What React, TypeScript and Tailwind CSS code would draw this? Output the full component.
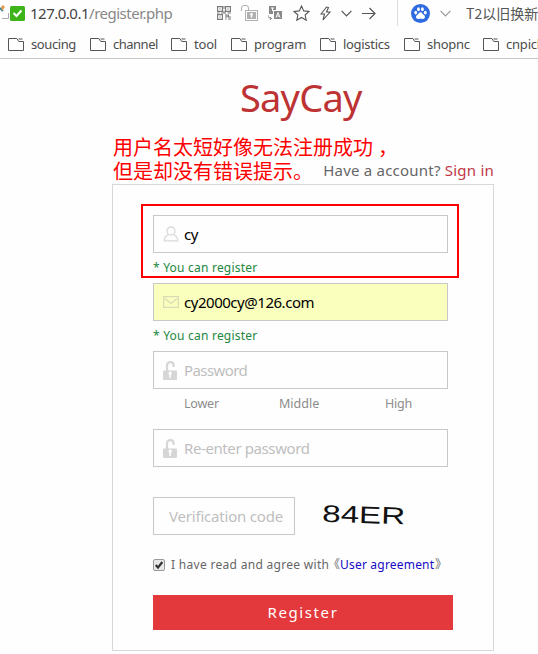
import type { ReactNode } from "react";

const FONT = "font-['Noto_Sans','Noto_Sans_CJK_SC',sans-serif]";

function FolderIcon() {
  return (
    <svg className="mt-px h-[13px] w-4 shrink-0" viewBox="0 0 16 13" fill="none" stroke="#555" strokeWidth="1">
      <path d="M.5 12.5V.5h8.3l2 3h4.7v9zM10.5 1h4" />
    </svg>
  );
}

function Bookmark({ label, width, text }: { label: string; width: string; text: string }) {
  return (
    <div className={`flex shrink-0 items-center gap-[7px] ${width}`}>
      <FolderIcon />
      <span className={`whitespace-nowrap text-[13px] leading-4 text-[#4c4c4c] ${text}`}>{label}</span>
    </div>
  );
}

function QrIcon() {
  return (
    <svg className="h-[14px] w-[14px] shrink-0" viewBox="0 0 14 14" fill="none" stroke="#777" strokeWidth="1.1">
      <path d="M.6.6h4.8v4.8H.6zM8.6.6h4.8v4.8H8.6zM.6 8.6h4.8v4.8H.6zM2.4 3h1.2M10.4 3h1.2M2.4 11h1.2M7 0v3M7 4.5v2M0 7h2.5M4 7h5M10.5 7H14M8 9h2v2H8M11.5 8.5v2.5H14M8 13h1.5M11 13h3" />
    </svg>
  );
}

function UnlockedBadgeIcon() {
  return (
    <svg className="h-[17px] w-[17px] shrink-0" viewBox="0 0 17 17" fill="none" stroke="#b0b0b0">
      <path d="M.5 6V3A2.5 2.5 0 0 1 3 .5h2A2.5 2.5 0 0 1 7.5 3v2.5" />
      <rect x="4.5" y="5.5" width="12" height="10" />
      <path fill="#b0b0b0" stroke="none" d="M6 7h9v7H6z" />
      <path stroke="#fff" strokeWidth="1.5" d="M10.5 9v3.5" />
      <circle cx="10.5" cy="9.3" r="1.3" fill="#fff" stroke="none" />
    </svg>
  );
}

function TranslateIcon() {
  return (
    <svg className="h-[14px] w-[14px] shrink-0" viewBox="0 0 14 14" fill="none">
      <path fill="#888" d="M1 0h7v4H5v4H1zM6 5h8v8H6z" />
      <path stroke="#fff" d="M3 2h3M4.5 2v3M8 11.5l2-5 2 5M9 10h2" />
      <path stroke="#888" d="M.5 9.5v1q0 2 3 2M2 11l1.500 1.500L2 14" />
    </svg>
  );
}

function Chevron({ color }: { color: string }) {
  return (
    <svg className="h-[7px] w-[11px] shrink-0" viewBox="0 0 11 7" fill="none" stroke={color} strokeWidth="1.2">
      <path d="m.6.8 4.9 5 4.9-5" />
    </svg>
  );
}

function BrowserBar() {
  return (
    <div className="flex h-[26px] items-center">
      <svg className="h-[26px] w-[10px] shrink-0" viewBox="0 0 10 26" fill="none">
        <path stroke="#2786a8" strokeWidth="2" d="m0 8 3 3" />
        <path fill="#e59a4b" d="m1 7 2-2 2 2-3 4z" />
        <path stroke="#aaa" d="M2 18.5h6.500V13" />
      </svg>
      <svg className="h-[15px] w-[15px] shrink-0" viewBox="0 0 15 15" fill="none">
        <rect width="15" height="15" rx="1.5" fill="#3db518" />
        <path stroke="#fff" strokeWidth="2" d="m3.5 7 3 3 5-5.500" />
      </svg>
      <div className="ml-[5px] w-[187px] shrink-0 whitespace-nowrap text-[15px] leading-6 tracking-[-0.5px] text-[#888]">
        <span className="text-[#444]">127.0.0.1</span>/register.php
      </div>
      <QrIcon />
      <div className="ml-[10px] flex shrink-0"><UnlockedBadgeIcon /></div>
      <div className="ml-[10px] flex shrink-0"><TranslateIcon /></div>
      <svg className="ml-[11px] h-4 w-[17px] shrink-0" viewBox="0 0 17 16" fill="none" stroke="#555" strokeWidth="1.1">
        <path d="m8.5 1 2.200 4.900 5.300.6-3.900 3.500 1.100 5.200-4.700-2.700-4.700 2.700L4.900 10 1 6.500l5.300-.6z" />
      </svg>
      <svg className="ml-[10px] h-[15px] w-[11px] shrink-0" viewBox="0 0 11 15" fill="none" stroke="#555" strokeWidth="1.1">
        <path d="M6.5 1 1 8h3.500L3 14l7-8H6.500l2-4.500z" />
      </svg>
      <div className="ml-[10px] flex shrink-0"><Chevron color="#555" /></div>
      <svg className="ml-[10px] h-[13px] w-[14px] shrink-0" viewBox="0 0 14 13" fill="none" stroke="#555" strokeWidth="1.2">
        <path d="M0 6.5h13M7.5 1 13 6.500 7.500 12" />
      </svg>
      <div className="ml-[21px] h-full w-px shrink-0 bg-[#ddd]" />
      <svg className="ml-[13px] h-[19px] w-[19px] shrink-0" viewBox="0 0 19 19">
        <circle cx="9.5" cy="9.5" r="9.5" fill="#2f6be0" />
        <g fill="#fff">
          <ellipse cx="4.7" cy="8.6" rx="1.4" ry="1.9" />
          <ellipse cx="7.5" cy="5.3" rx="1.4" ry="2" />
          <ellipse cx="11.4" cy="5.3" rx="1.4" ry="2" />
          <ellipse cx="14.3" cy="8.6" rx="1.4" ry="1.9" />
          <path d="M9.5 8.200c1.500 0 2 1.800 3.400 2.800 2 1.600 1 4-1 3.900-1.600-.2-3-.2-4.700 0-2.100.1-3.100-2.300-1.100-3.900C7.500 10 8 8.200 9.500 8.200z" />
        </g>
      </svg>
      <div className="ml-[10px] flex shrink-0"><Chevron color="#999" /></div>
      <span className="ml-[15px] whitespace-nowrap font-['Noto_Sans_CJK_SC',sans-serif] text-[14px] leading-6 text-[#555]">T2以旧换新</span>
    </div>
  );
}

function BookmarksBar() {
  return (
    <div className="flex h-[33px] border-b border-[#c8c8c8] pb-px pl-2 pt-[5px]">
      <Bookmark label="soucing" width="w-[82px]" text="tracking-[-0.4px]" />
      <Bookmark label="channel" width="w-[81px]" text="tracking-[-0.5px]" />
      <Bookmark label="tool" width="w-[60px]" text="tracking-[-0.2px]" />
      <Bookmark label="program" width="w-[89px]" text="tracking-[-0.2px]" />
      <Bookmark label="logistics" width="w-[84px]" text="tracking-[-0.3px]" />
      <Bookmark label="shopnc" width="w-[79px]" text="tracking-[-0.3px]" />
      <Bookmark label="cnpick" width="w-[70px]" text="tracking-[-0.2px]" />
    </div>
  );
}

function UserIcon() {
  return (
    <svg className="h-4 w-4" viewBox="0 0 16 16" fill="none" stroke="#d9d9d9" strokeWidth="1.3">
      <circle cx="8" cy="5" r="4" />
      <path d="M5.5 8.500C3 9.500 1.500 11.500 1.200 14.800h13.600c-.3-3.300-1.800-5.300-4.300-6.300" />
    </svg>
  );
}

function MailIcon() {
  return (
    <svg className="h-3 w-4" viewBox="0 0 16 12" fill="none" stroke="#d9dcb4" strokeWidth="1.3">
      <path d="M.6.6h14.8v10.8H.6zM2 2.500l6 5 6-5" />
    </svg>
  );
}

function LockIcon() {
  return (
    <svg className="h-[19px] w-[15px]" viewBox="0 0 15 19" fill="none">
      <path stroke="#d6d6d6" strokeWidth="2.2" d="M4 10V4.500Q4 1.200 7.300 1.200T10.600 4.500V6" />
      <rect y="9.5" width="14" height="9.5" rx="1" fill="#d6d6d6" />
      <path fill="#fff" d="M5.5 12.500a1.700 1.700 0 1 1 2.400 1.300V17H6.300v-3.200a1.500 1.500 0 0 1-.8-1.300z" />
    </svg>
  );
}

function Field({ icon, tone, children }: { icon: ReactNode; tone: string; children: ReactNode }) {
  return (
    <div className={`flex h-[38px] w-[295px] items-center border border-[#c8c8c8] pl-[9px] text-[15px] ${tone}`}>
      <span className="w-[21px] shrink-0">{icon}</span>
      {children}
    </div>
  );
}

function Hint() {
  return (
    <div className="flex h-[30px] items-center text-[12px] text-[#23873f]">
      <span className="whitespace-nowrap tracking-[0.22px]">* You can register</span>
    </div>
  );
}

export default function App() {
  return (
    <div className={`h-[654px] w-[538px] overflow-hidden bg-[#fefefe] ${FONT}`}>
      <BrowserBar />
      <BookmarksBar />
      <h1 className="mt-[11px] h-[54px] pl-[240px] text-[38px] leading-[54px] tracking-[-0.8px] text-[#bd3333]">SayCay</h1>
      <div className="ml-[112px] mt-[11px] h-[49px] w-[382px]">
        <p className="h-6 whitespace-nowrap pl-px font-['Noto_Sans_CJK_SC',sans-serif] text-[20px] leading-6 text-[#ff0000]">
          用户名太短好像无法注册成功<span className="ml-[5px]">，</span>
        </p>
        <div className="flex h-[25px] items-start justify-between">
          <p className="whitespace-nowrap pl-px font-['Noto_Sans_CJK_SC',sans-serif] text-[20px] leading-6 text-[#ff0000]">
            但是却没有错误提示。
          </p>
          <p className="-mt-px whitespace-nowrap text-[15px] leading-6 tracking-[0.22px] text-[#666]">
            Have a account? <span className="text-[#c03945]">Sign in</span>
          </p>
        </div>
      </div>
      <form className="relative ml-[112px] h-[467px] w-[382px] border border-[#d8d8d8] px-[40px] pt-[30px]">
        <div className="pointer-events-none absolute left-[28px] top-[19px] h-[74px] w-[318px] border-2 border-[#ff0000]" />
        <Field icon={<UserIcon />} tone="text-black"><span className="tracking-[-0.5px]">cy</span></Field>
        <Hint />
        <Field icon={<MailIcon />} tone="bg-[#faffbd] text-black"><span className="tracking-[-0.47px]">cy2000cy@126.com</span></Field>
        <Hint />
        <Field icon={<LockIcon />} tone="text-[#bfbfbf]"><span className="tracking-[-0.6px]">Password</span></Field>
        <div className="flex h-[40px] pl-[31px] text-[12.5px] leading-[30px] text-[#8c8c8c]">
          <span className="w-[95px] shrink-0 tracking-[-0.2px]">Lower</span>
          <span className="w-[106px] shrink-0">Middle</span>
          <span className="tracking-[-0.2px]">High</span>
        </div>
        <Field icon={<LockIcon />} tone="text-[#bfbfbf]"><span className="tracking-[-0.4px]">Re-enter password</span></Field>
        <div className="mt-[30px] flex h-[38px] items-center">
          <div className="flex h-[38px] w-[142px] shrink-0 items-center whitespace-nowrap border border-[#c8c8c8] pl-[15px] text-[15px] text-[#bfbfbf]">
            <span className="tracking-[-0.2px]">Verification code</span>
          </div>
          <svg className="ml-[12px] h-[38px] w-[132px] shrink-0" viewBox="0 0 132 38">
            <g transform="rotate(1.8 16 24)">
              <text x="15" y="24.8" textLength="83" lengthAdjust="spacingAndGlyphs" fontFamily="Liberation Sans" fontSize="24" fill="#111">84ER</text>
            </g>
          </svg>
        </div>
        <div className="mt-[20px] flex h-5 items-center whitespace-nowrap text-[12px] leading-5 text-[#666]">
          <svg className="mr-[6px] h-3 w-3 shrink-0" viewBox="0 0 12 12">
            <rect x=".5" y=".5" width="11" height="11" rx="1.5" fill="#e8e8e8" stroke="#999" />
            <path d="m2.8 6 2.200 2.600L9.300 3" fill="none" stroke="#333" strokeWidth="2.2" />
          </svg>
          <span className="w-[157px] shrink-0 tracking-[0.3px]">I have read and agree with</span>
          <span className="-ml-px w-[13px] shrink-0 text-right">《</span>
          <span className="w-[95px] shrink-0 tracking-[0.2px] text-[#1509c5]">User agreement</span>
          <span>》</span>
        </div>
        <div className="mt-[20px] flex h-[35px] w-[300px] items-center justify-center bg-[#e4393c] text-[15px] tracking-[1.6px] text-white">
          <span>Register</span>
        </div>
      </form>
    </div>
  );
}
